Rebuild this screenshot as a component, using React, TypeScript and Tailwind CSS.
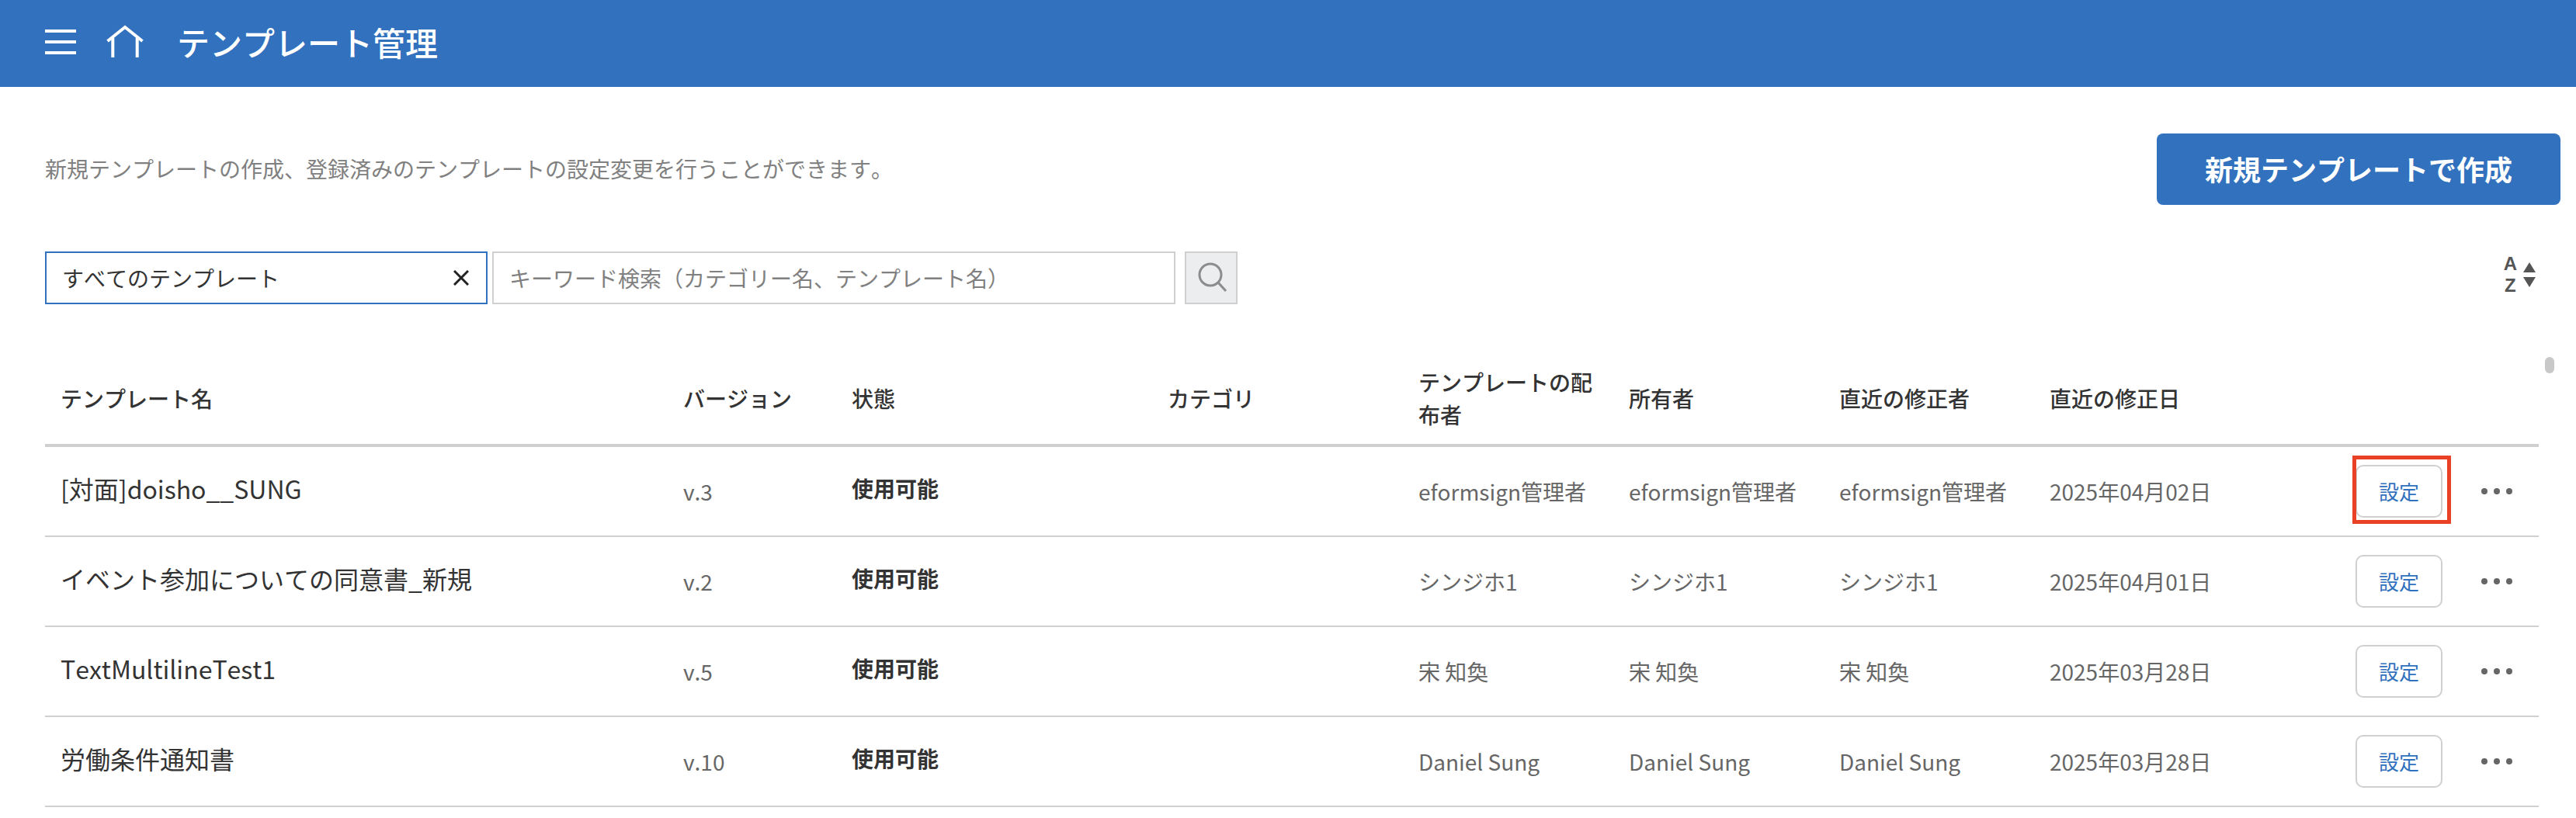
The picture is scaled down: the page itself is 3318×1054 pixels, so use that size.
import { useState } from "react";

type Template = {
  name: string;
  version: string;
  status: string;
  category: string;
  person: string;
  date: string;
  highlighted?: boolean;
};

const templates: Template[] = [
  { name: "[対面]doisho__SUNG", version: "v.3", status: "使用可能", category: "", person: "eformsign管理者", date: "2025年04月02日", highlighted: true },
  { name: "イベント参加についての同意書_新規", version: "v.2", status: "使用可能", category: "", person: "シンジホ1", date: "2025年04月01日" },
  { name: "TextMultilineTest1", version: "v.5", status: "使用可能", category: "", person: "宋 知奐", date: "2025年03月28日" },
  { name: "労働条件通知書", version: "v.10", status: "使用可能", category: "", person: "Daniel Sung", date: "2025年03月28日" },
];

const headings = ["テンプレート名", "バージョン", "状態", "カテゴリ", "テンプレートの配布者", "所有者", "直近の修正者", "直近の修正日"];

function Header() {
  return (
    <header className="flex h-28 items-center bg-[#3171bd] px-[58px] pb-1 text-white">
      <button type="button" aria-label="メニュー" className="flex w-10 flex-col gap-[10px]">
        <span className="h-1 w-full bg-white" />
        <span className="h-1 w-full bg-white" />
        <span className="h-1 w-full bg-white" />
      </button>
      <a href="#home" aria-label="ホーム" className="ml-[39px] block">
        <svg width="48" height="44" viewBox="0 0 48 44" fill="none" stroke="currentColor" strokeWidth="4">
          <path d="M1.500 21 24 3l22.500 18" />
          <path d="M8.300 17v25M39.700 17v25" />
        </svg>
      </a>
      <h1 className="ml-[43px] text-[42px] leading-[60px] font-medium">テンプレート管理</h1>
    </header>
  );
}

function SearchBar() {
  const [scope, setScope] = useState("すべてのテンプレート");
  const [keyword, setKeyword] = useState("");
  return (
    <form className="flex items-center" onSubmit={(e) => e.preventDefault()}>
      <div className="flex h-[68px] w-[570px] items-center border-2 border-[#3171bd] pr-[22px] pl-5">
        <input
          aria-label="テンプレートの種類"
          value={scope}
          onChange={(e) => setScope(e.target.value)}
          className="min-w-0 flex-1 text-[28px] text-[#333] outline-none"
        />
        <button type="button" aria-label="クリア" onClick={() => setScope("")}>
          <svg width="20" height="20" viewBox="0 0 20 20" stroke="#222" strokeWidth="3">
            <path d="M1 1l18 18M19 1 1 19" />
          </svg>
        </button>
      </div>
      <input
        aria-label="キーワード検索"
        placeholder="キーワード検索（カテゴリー名、テンプレート名）"
        value={keyword}
        onChange={(e) => setKeyword(e.target.value)}
        className="ml-[6px] h-[68px] w-[880px] border-2 border-[#d0d0d0] px-5 text-[28px] text-[#333] outline-none placeholder:text-[#808080]"
      />
      <button type="submit" aria-label="検索" className="ml-3 flex size-[68px] items-center justify-center border-2 border-[#d0d0d0] bg-[#ecedef]">
        <svg width="40" height="40" viewBox="0 0 40 40" fill="none" stroke="#8c8c8c" strokeWidth="3">
          <circle cx="19" cy="16" r="14" />
          <path d="M29 26l10 11" />
        </svg>
      </button>
    </form>
  );
}

function SortButton() {
  return (
    <button type="button" aria-label="並べ替え" className="flex items-center gap-2 pb-2 text-[#555]">
      <span className="flex flex-col text-center font-['Liberation_Sans',sans-serif] text-2xl leading-7 font-bold">
        <span>A</span>
        <span>Z</span>
      </span>
      <svg width="16" height="32" viewBox="0 0 16 32" fill="currentColor">
        <path d="M8 0l8 13H0zM0 19h16L8 32z" />
      </svg>
    </button>
  );
}

function Row({ template }: { template: Template }) {
  return (
    <tr className="h-[116px] text-[28px] text-[#666] *:border-b-2 *:border-[#d0d0d0]">
      <td className="px-5 pb-2 text-[32px] text-[#333]">{template.name}</td>
      <td className="px-5">{template.version}</td>
      <td className="px-5 pb-2 font-bold text-[#333]">{template.status}</td>
      <td className="px-5">{template.category}</td>
      <td className="px-5">{template.person}</td>
      <td className="px-5">{template.person}</td>
      <td className="px-5">{template.person}</td>
      <td className="px-5">{template.date}</td>
      <td className="pr-[34px]">
        <div className="flex items-center justify-end gap-[50px]">
          <div className="relative">
            <button type="button" className="block h-[68px] w-28 rounded-[10px] border-2 border-[#d0d0d0] bg-white pb-0.5 text-[26px] text-[#3171bd]">
              設定
            </button>
            {template.highlighted && <span className="pointer-events-none absolute -top-3 -right-[11px] -bottom-2 -left-1 border-[5px] border-[#ea4025]" />}
          </div>
          <button type="button" aria-label="その他" className="flex gap-2">
            <span className="size-2 rounded-full bg-[#666]" />
            <span className="size-2 rounded-full bg-[#666]" />
            <span className="size-2 rounded-full bg-[#666]" />
          </button>
        </div>
      </td>
    </tr>
  );
}

export default function App() {
  return (
    <div className="bg-white font-['Noto_Sans_CJK_JP',sans-serif] text-[#333] [font-kerning:none]">
      <Header />
      <main className="pt-[60px] pl-[58px]">
        <div className="flex items-center justify-between pr-5">
          <p className="pb-0.5 text-[28px] text-[#808080]">新規テンプレートの作成、登録済みのテンプレートの設定変更を行うことができます。</p>
          <button type="button" className="h-[92px] w-[520px] rounded-lg bg-[#3171bd] pb-0.5 text-4xl font-bold text-white">
            新規テンプレートで作成
          </button>
        </div>
        <div className="mt-[60px] flex items-center justify-between pr-[52px]">
          <SearchBar />
          <SortButton />
        </div>
        <div className="relative mt-16 pr-12">
          <table className="w-full table-fixed border-separate border-spacing-0 text-left">
            <colgroup>
              <col className="w-[802px]" />
              <col className="w-[217px]" />
              <col className="w-[407px]" />
              <col className="w-[323px]" />
              <col className="w-[271px]" />
              <col className="w-[271px]" />
              <col className="w-[271px]" />
              <col className="w-[271px]" />
              <col className="w-[379px]" />
            </colgroup>
            <thead>
              <tr className="h-[120px] text-[28px] leading-[42px] *:border-b-4 *:border-[#d0d0d0]">
                {headings.map((h) => (
                  <th key={h} scope="col" className="px-5 pb-0.5 font-medium">
                    {h}
                  </th>
                ))}
                <th aria-label="操作" />
              </tr>
            </thead>
            <tbody>
              {templates.map((t) => (
                <Row key={t.name} template={t} />
              ))}
            </tbody>
          </table>
          <div className="absolute top-1 right-7 h-[21px] w-3 rounded-full bg-[#c8c8c8]" />
        </div>
      </main>
    </div>
  );
}
